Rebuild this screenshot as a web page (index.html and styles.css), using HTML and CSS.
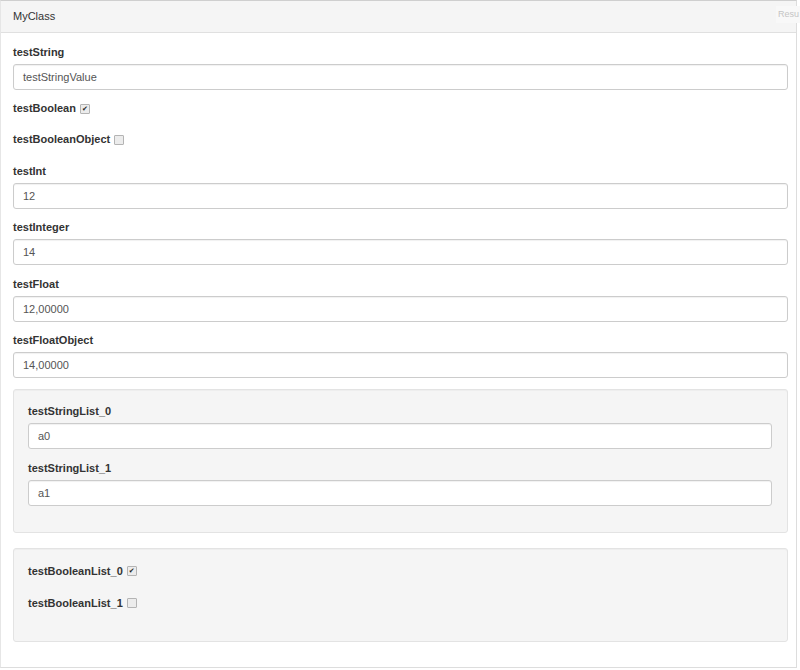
FILE: index.html
```html
<!DOCTYPE html>
<html>
<head>
<meta charset="utf-8">
<link rel="stylesheet" href="styles.css">
</head>
<body>
<div class="panel">
  <div class="panel-heading">MyClass</div>
  <div class="panel-body">
    <div class="group">
      <div class="label">testString</div>
      <div class="input">testStringValue</div>
    </div>
    <div class="group check-group">
      <div class="label">testBoolean <span class="cb checked">&#10004;</span></div>
    </div>
    <div class="group check-group">
      <div class="label">testBooleanObject <span class="cb"></span></div>
    </div>
    <div class="group">
      <div class="label">testInt</div>
      <div class="input">12</div>
    </div>
    <div class="group">
      <div class="label">testInteger</div>
      <div class="input">14</div>
    </div>
    <div class="group">
      <div class="label">testFloat</div>
      <div class="input">12,00000</div>
    </div>
    <div class="group">
      <div class="label">testFloatObject</div>
      <div class="input">14,00000</div>
    </div>
    <div class="well">
      <div class="group">
        <div class="label">testStringList_0</div>
        <div class="input">a0</div>
      </div>
      <div class="group">
        <div class="label">testStringList_1</div>
        <div class="input">a1</div>
      </div>
    </div>
    <div class="well well-checks">
      <div class="group check-group">
        <div class="label">testBooleanList_0 <span class="cb checked">&#10004;</span></div>
      </div>
      <div class="group check-group">
        <div class="label">testBooleanList_1 <span class="cb"></span></div>
      </div>
    </div>
  </div>
</div>
<div class="result-tag">Resu</div>
</body>
</html>
```
FILE: styles.css
```css
html, body {
  margin: 0;
  padding: 0;
  background: #fff;
  overflow: hidden;
}
body {
  font-family: "Liberation Sans", Arial, sans-serif;
  font-size: 11px;
  color: #333;
  width: 800px;
  height: 670px;
  position: relative;
}
.panel {
  width: 797px;
  box-sizing: border-box;
  border: 1px solid #ddd;
  border-top-color: #cfcfcf;
  border-left-color: #e6e6e6;
}
.panel-heading {
  height: 31px;
  line-height: 31px;
  padding: 0 12px;
  background: #f5f5f5;
  border-bottom: 1px solid #e0e0e0;
  color: #333;
  font-size: 11px;
}
.panel-body {
  padding: 11.7px 8px 10px 12px;
}
.group {
  margin-bottom: 11.3px;
}
.check-group {
  margin-bottom: 16px;
}
.label {
  font-weight: bold;
  line-height: 15.5px;
  margin-bottom: 3.5px;
  color: #333;
  display: flex;
  align-items: center;
}
.check-group .label {
  margin-bottom: 0;
}
.input {
  height: 26px;
  box-sizing: border-box;
  border: 1px solid #ccc;
  border-radius: 3px;
  padding: 0 9px;
  line-height: 24px;
  color: #555;
  background: #fff;
  box-shadow: inset 0 1px 1px rgba(0,0,0,0.06);
}
.cb {
  display: inline-block;
  width: 8px;
  height: 8px;
  margin-left: 4px;
  border: 1px solid #b4b4b4;
  border-radius: 1px;
  background: #ececec;
  font-size: 7px;
  line-height: 8px;
  text-align: center;
  color: #222;
  font-weight: normal;
  font-family: "DejaVu Sans", sans-serif;
}
.well {
  background: #f5f5f5;
  border: 1px solid #e3e3e3;
  border-radius: 3px;
  padding: 14.3px 15px 14.8px 14px;
  margin-bottom: 15px;
  box-shadow: inset 0 1px 1px rgba(0,0,0,0.03);
}
.well-checks {
  padding-top: 14.8px;
}
.well-checks .check-group {
  margin-bottom: 16.5px;
}
.well-checks .check-group:last-child {
  margin-bottom: 15.5px;
}
.result-tag {
  position: absolute;
  top: 6px;
  left: 776px;
  width: 22px;
  height: 17px;
  line-height: 17px;
  padding-left: 2px;
  font-size: 9px;
  color: #c4c4c4;
  background: #f8f8f8;
  white-space: nowrap;
}
```
